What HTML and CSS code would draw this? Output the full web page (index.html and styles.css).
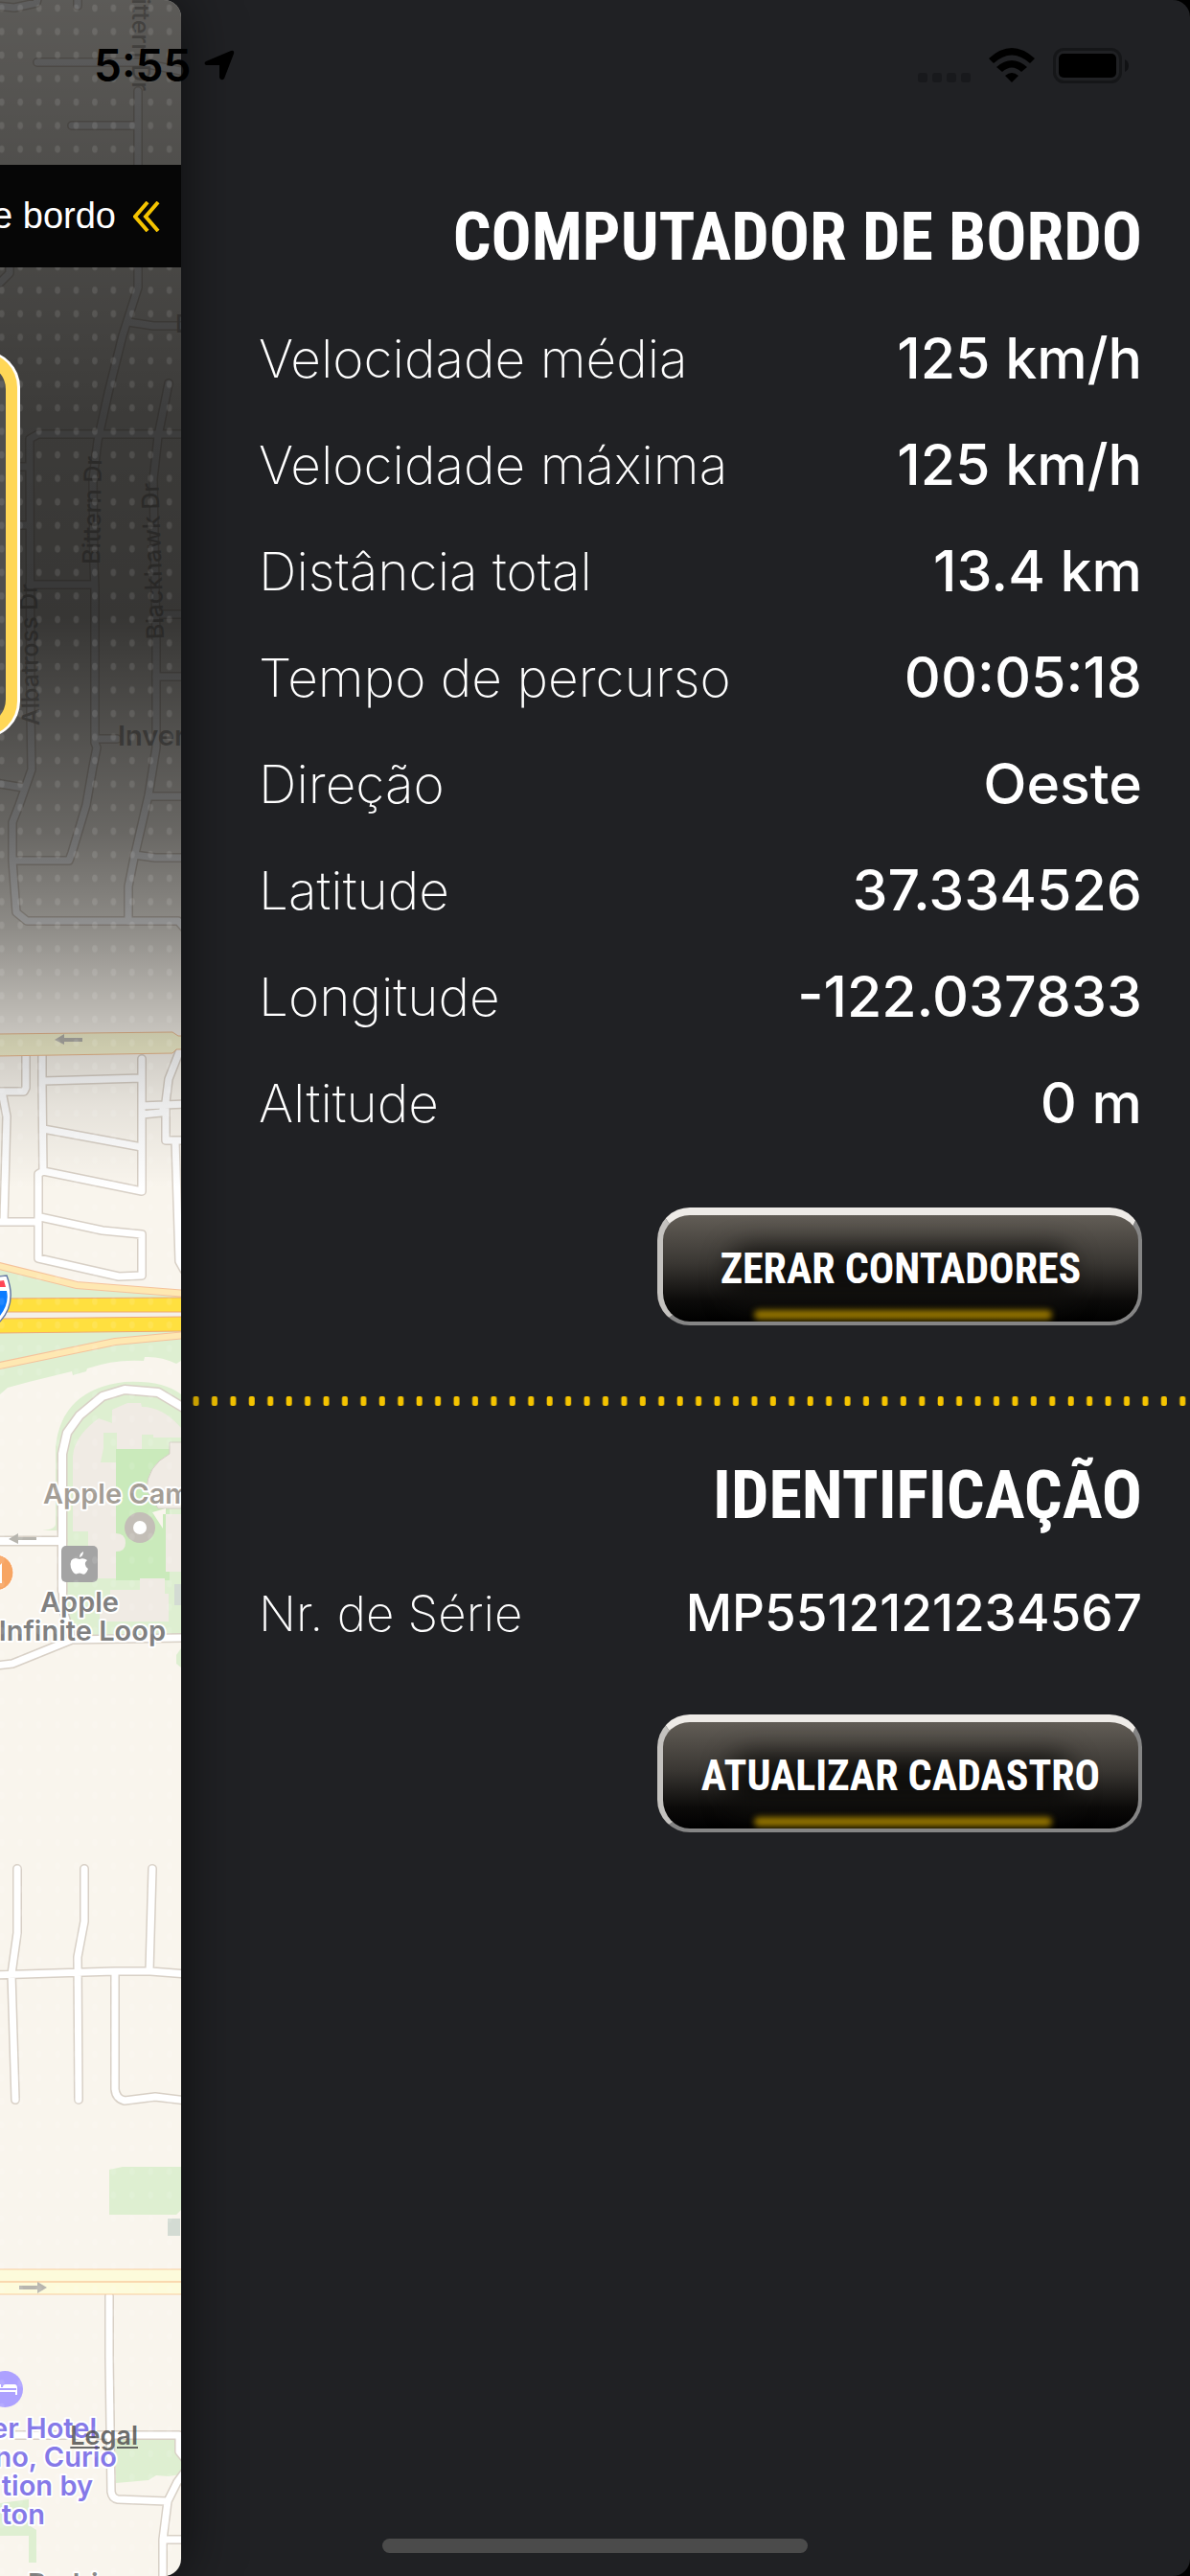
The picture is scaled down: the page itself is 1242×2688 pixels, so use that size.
FILE: index.html
```html
<!DOCTYPE html>
<html lang="pt-BR">
<head>
  <meta charset="UTF-8" />
  <meta name="viewport" content="width=device-width, initial-scale=1.0"/>
  <title>Computador de bordo</title>
  <link rel="stylesheet" href="styles.css">
</head>
<body>
  <header class="status-bar">
    <span class="status-time">5:55</span>
    <svg class="icon-location" viewBox="0 0 32 32" width="32" height="32" aria-hidden="true">
      <path d="M28 1 L2 12 Q-1 14 2 16 L16 16 L16 29 Q18 33 21 30 L31 4 Q32 0 28 1 Z"/>
    </svg>
    <svg class="icon-signal" viewBox="0 0 56 37" width="56" height="37" aria-hidden="true">
      <rect x="0" y="26" width="10" height="10" rx="3"/>
      <rect x="15" y="26" width="10" height="10" rx="3"/>
      <rect x="30" y="26" width="10" height="10" rx="3"/>
      <rect x="45" y="26" width="10" height="10" rx="3"/>
    </svg>
    <svg class="icon-wifi" viewBox="0 0 48 37" width="48" height="37" aria-hidden="true">
      <path d="M0 11 Q24 -11 48 11 L43 16 Q24 -1 5 16 Z"/>
      <path d="M8 20 Q24 6 40 20 L34 25 Q24 16 14 25 Z"/>
      <path d="M17 29 Q24 23 31 29 L24 36 Z"/>
    </svg>
    <svg class="icon-battery" viewBox="0 0 79 37" width="79" height="37" aria-hidden="true">
      <rect x="1.5" y="1.5" width="69" height="34" rx="10" fill="none" stroke="#151618" stroke-width="3"/>
      <rect x="6" y="6" width="60" height="25" rx="5"/>
      <path d="M75 12 Q79 14 79 18.500 Q79 23 75 25 Z" fill="#111214"/>
    </svg>
  </header>

  <main class="screen">
    <section class="map" aria-label="Mapa">
      <svg class="map-canvas" viewBox="0 0 189 2688" preserveAspectRatio="xMinYMin slice">
        <defs>
          <linearGradient id="shade" x1="0" y1="0" x2="0" y2="1240" gradientUnits="userSpaceOnUse">
            <stop offset="0" stop-opacity="0.63"/>
            <stop offset="0.140" stop-opacity="0.680"/>
            <stop offset="0.250" stop-opacity="0.720"/>
            <stop offset="0.350" stop-opacity="0.760"/>
            <stop offset="0.520" stop-opacity="0.780"/>
            <stop offset="0.600" stop-opacity="0.690"/>
            <stop offset="0.700" stop-opacity="0.580"/>
            <stop offset="0.780" stop-opacity="0.430"/>
            <stop offset="0.870" stop-opacity="0.200"/>
            <stop offset="0.930" stop-opacity="0.080"/>
            <stop offset="1" stop-opacity="0"/>
          </linearGradient>
          <pattern id="dots" x="11.500" y="-4" width="19.430" height="24.540" patternUnits="userSpaceOnUse">
            <ellipse cx="9.700" cy="12.300" rx="2.800" ry="3.800" fill="#fff" fill-opacity="0.100"/>
          </pattern>
          <g id="roads">
            <path d="M-5 6 L15 8 L38 3 L40 -5 M81 -5 V6 M39 65 H145 L189 74 M75 131 H144 M144 95 V300 L128 350 L113 410 L102 460 L97 500 L98 590 L99 613 V775 L101 780 L97 800 L90 840 L75 890 L72 898 H14"/>
            <path d="M134 336 L160 340 H195 M0 295 L10 285 V279 M176 400 L165 455 L160 500 L163 670 V780 L155 830 L140 895 L134 925 V961"/>
            <path d="M195 453 H40 L31 458 L32 745 L33 803 L20 840 L13 858 V898 L17 952 L28 961 H186 L192 968 M31 610 H98 M-5 487 H31 M21 548 H31 M163 706 H195 M163 641 H195 M100 771 H122 M158 831 H195 M-5 817 L25 822 M140 892 L162 895 H195"/>
            <path d="M27 1100 V1135 L25 1139 H-5 M44 1100 V1130 L45 1222 L40 1225 V1313 L124 1332 L148 1331 V1288 L107 1284 L42 1270 M45 1128 L148 1125 M148 1105 V1243 L45 1222 M148 1154 L195 1152 M148 1163 L168 1161 L173 1155 M187 1098 L176 1126 L173 1150 V1190 H195 M45 1178 L148 1197 M183 1190 L187 1316 L192 1325 M2 1139 L7 1165 L4 1275 M-5 1275 H40"/>
            <path d="M18 1950 V2017 L12 2060 L16 2191 M88 1950 V2005 L81 2042 L82 2191 M159 1950 L156 2056 M-5 2061 L120 2057 H157 L195 2060 M120 2057 V2180 Q121 2190 130 2192 L162 2188 L195 2192"/>
            <path d="M-5 1738 L13 1736 L75 1711 L195 1709 M65 1650 L66 1680 L75 1711"/>
            <path d="M114 2396 V2460 L116 2600 Q117 2607 123 2608 L174 2610 M16 2541 H187 V2558 L194 2567 M194 2578 L185 2590 L175 2610 L170 2650 V2695 M170 2650 H195"/>
          </g>
          <g id="avenues">
            <path d="M65 1660 V1517 L70 1495 L83 1477 L107 1457 L130 1450 L165 1453 L195 1471"/>
            <path d="M-5 1608 H65"/>
          </g>
        </defs>

        <rect class="land" width="189" height="2688"/>

        <!-- parks and campus -->
        <path class="park" d="M0 1322 L80 1342 L189 1352 V1420 L184 1423 Q168 1415 151 1416 L150 1420 Q120 1418 91 1428 L90 1431 L76 1435 L75 1431 L30 1442 L8 1448 L0 1455 Z"/>
        <path class="park" d="M58 1590 V1510 Q64 1450 130 1442 Q170 1440 189 1455 V1710 H78 L62 1660 V1597 Q56 1597 40 1597 Q58 1597 58 1590 Z"/>
        <path class="park" d="M189 1720 L184 1727 V1736 L189 1740 Z"/>
        <path class="grass" d="M121 1512 H177 V1649 H121 Z"/>
        <path class="building" d="M77 1513 Q82 1495 103 1480 L117 1485 V1471 L133 1464 H147 L148 1468 Q170 1468 189 1490 V1500 H160 V1497 H148 V1512 H122 V1495 H108 V1511 L105 1526 H121 V1600 Q131 1600 131 1610 Q131 1619 121 1619 V1647 H92 V1598 H76 V1520 Z"/>
        <path class="building edge" d="M192 1505 H177 V1517 Q153 1530 153 1555 L165 1574 H192 Z"/>
        <path class="building" d="M173 1580 H189 V1640 H173 Z M115 1659 H146 V1647 H172 V1663 H176 V1692 H104 V1673 H115 Z"/>
        <path class="land" d="M159 1578 L173 1574 V1580 H170 V1595 Z"/>
        <rect class="pool" x="182" y="1653" width="7" height="22"/>
        <path class="park" d="M114 2264 L128 2261 H189 V2306 L184 2311 H114 Z M120 2546 H183 V2560 L189 2568 V2582 L182 2583 L176 2584 L163 2583 L155 2588 L121 2591 Z M0 2612 L30 2608 V2635 L38 2640 V2674 H30 V2646 H0 Z"/>
        <rect class="pool" x="175" y="2315" width="13" height="18"/>

        <!-- streets: casing first, fill on top -->
        <use href="#roads" class="casing"/>
        <use href="#avenues" class="casing wide"/>
        <use href="#roads" class="fill"/>
        <use href="#avenues" class="fill wide"/>

        <path class="avenue" d="M-3 1079 L180 1077 L186 1081 H192 V1095 H184 L180 1099 L-3 1102 Z"/>
        <path class="ramp-edge" d="M-5 1320 L80 1341 L195 1350 M-5 1426 L120 1400 L195 1393"/>
        <path class="ramp" d="M-5 1320 L80 1341 L195 1350 M-5 1426 L120 1400 L195 1393"/>
        <rect x="0" y="1368" width="189" height="8" fill="#f4f0e8"/>
        <path class="highway" d="M-3 1355 L192 1354 V1369 H-3 Z M-3 1376 L192 1374 V1389 L-3 1391 Z"/>
        <path class="street-yellow" d="M-3 2368 H192 V2381 H-3 Z M-3 2381 H192 V2394 H-3 Z"/>
        <path class="way" d="M57 1085 L67 1079 V1083 H86 V1087 H67 V1090 Z M9 1606 L19 1600 V1604 H38 V1607 H19 V1611 Z M49 2387 L39 2381 V2385 H20 V2389 H39 V2393 Z"/>

        <!-- interstate shield -->
        <path d="M-10 1333 L7 1331 Q18 1360 0 1379 L-10 1385 Z" fill="#fff" stroke="#6478a5" stroke-width="1.500"/>
        <path d="M-10 1338 L4 1336 L6 1343 H-10 Z" fill="#ff4556"/>
        <path d="M-10 1347 H7 Q10 1360 0 1373 H-10 Z" fill="#0b7bff"/>

        <!-- places -->
        <circle cx="146" cy="1594" r="16" fill="#c3beb7"/>
        <circle cx="146" cy="1594" r="7" fill="#fff"/>
        <rect x="64" y="1613" width="38" height="38" rx="5" fill="#a4a4a4"/>
        <path d="M83 1627 Q87 1625 91 1628 Q86 1632 92 1637 Q89 1645 85 1642 Q83 1641 81 1642 Q77 1644 74 1636 Q72 1626 79 1626 Z M83 1625 Q83 1621 87 1619 Q87 1624 83 1625 Z" fill="#fff"/>
        <circle cx="-5" cy="1641" r="19" fill="#f7a563" stroke="#fff" stroke-width="1"/>
        <path d="M-4 1637 L2 1631 V1652 H0 V1643 H-4 Z" fill="#fff"/>
        <circle cx="5" cy="2493" r="19" fill="#ada1ff"/>
        <path d="M-5 2488 H1 V2491 H3 Q3 2488 6 2488 H15 Q18 2488 18 2492 V2499 H16 V2496 H-5 Z" fill="#fff"/>
        <path d="M-5 2492 H17 V2494 H-5 Z" fill="#ada1ff"/>

        <g class="label street">
          <text transform="translate(138 -18) rotate(90)">Bittern Dr</text>
          <text transform="translate(104 589) rotate(-89)">Bittern Dr</text>
          <text transform="translate(171 667) rotate(-92)">Blackhawk Dr</text>
          <text transform="translate(41 757) rotate(-91)">Albatross Dr</text>
          <text x="183" y="347">Dr</text>
        </g>
        <text class="label town" x="123" y="778">Inverness</text>
        <text class="label campus" x="45" y="1569">Apple Campus</text>
        <text class="label shop" x="83" y="1682" text-anchor="middle">Apple</text>
        <text class="label shop" x="173" y="1712" text-anchor="end">Infinite Loop</text>
        <g class="label hotel" text-anchor="end">
          <text x="101" y="2544">er Hotel</text>
          <text x="122" y="2574">no, Curio</text>
          <text x="97" y="2604">tion by</text>
          <text x="47" y="2634">ton</text>
        </g>
        <text class="label shop" x="29" y="2706">Rodrigues Ave</text>

        <rect width="189" height="1240" fill="url(#shade)"/>
        <rect width="189" height="2688" fill="url(#dots)"/>

        <!-- speed gauge frame -->
        <rect x="-200" y="366" width="221" height="404" rx="38" fill="#fff"/>
        <rect x="-198" y="368" width="216" height="400" rx="36" fill="#ffd757"/>
        <rect x="-186" y="380" width="192" height="376" rx="26" fill="#4e4e4e"/>
        <rect x="-186" y="380" width="192" height="376" rx="26" fill="url(#dots)"/>
      </svg>

      <button type="button" class="drawer-toggle">
        <span>Computador de bordo</span>
        <svg viewBox="0 0 28 32" width="28" height="32" aria-hidden="true">
          <path d="M15 1 L2 16 L15 31 M26 1 L13 16 L26 31"/>
        </svg>
      </button>
      <a class="legal" href="#legal">Legal</a>
    </section>

    <aside class="drawer">
      <section class="block">
        <h1>COMPUTADOR DE BORDO</h1>
        <dl class="readings">
          <div class="reading"><dt>Velocidade média</dt><dd>125 km/h</dd></div>
          <div class="reading"><dt>Velocidade máxima</dt><dd>125 km/h</dd></div>
          <div class="reading"><dt>Distância total</dt><dd>13.4 km</dd></div>
          <div class="reading"><dt>Tempo de percurso</dt><dd>00:05:18</dd></div>
          <div class="reading"><dt>Direção</dt><dd>Oeste</dd></div>
          <div class="reading"><dt>Latitude</dt><dd>37.334526</dd></div>
          <div class="reading"><dt>Longitude</dt><dd>-122.037833</dd></div>
          <div class="reading"><dt>Altitude</dt><dd>0 m</dd></div>
        </dl>
        <button type="button" class="metal-button">ZERAR CONTADORES</button>
      </section>

      <svg class="divider" width="100%" height="12" aria-hidden="true">
        <defs>
          <pattern id="rule" x="6" y="0" width="19.430" height="12" patternUnits="userSpaceOnUse">
            <rect x="6.500" y="1" width="6" height="10" rx="2" fill="#f5c400"/>
          </pattern>
        </defs>
        <rect width="100%" height="12" fill="url(#rule)"/>
      </svg>

      <section class="block">
        <h2>IDENTIFICAÇÃO</h2>
        <dl class="readings">
          <div class="reading serial"><dt>Nr. de Série</dt><dd>MP5512121234567</dd></div>
        </dl>
        <button type="button" class="metal-button">ATUALIZAR CADASTRO</button>
      </section>
    </aside>
  </main>

  <div class="home-indicator"></div>
</body>
</html>
```

FILE: styles.css
```css
:root {
  --panel: #202124;
  --yellow: #f5c400;
  --text: #fff;
  --condensed: "Roboto Condensed", Roboto, sans-serif;
}

* {
  box-sizing: border-box;
}

body {
  margin: 0;
  min-height: 100vh;
  position: relative;
  background-color: #000;
  color: var(--text);
  font-family: Inter, "Liberation Sans", sans-serif;
}

.screen {
  display: grid;
  grid-template-columns: 189px 1fr;
  min-height: 100vh;
  border-radius: 0 18px 18px 0;
  background-color: var(--panel);
}

/* status bar floats over both the map and the drawer */
.status-bar {
  position: absolute;
  top: 0;
  left: 0;
  right: 0;
  z-index: 3;
  display: flex;
  align-items: center;
  padding: 40px 64px 0 98px;
  height: 96px;
  color: #000;
}

.status-time {
  font-size: 46px;
  line-height: 56px;
  font-weight: 600;
}

.icon-location {
  margin-left: 14px;
}

.icon-signal {
  margin-left: auto;
  fill: #18191c;
}

.icon-wifi {
  margin-left: 18px;
}

.icon-battery {
  margin-left: 19px;
}

/* map */
.map {
  position: relative;
  z-index: 2;
  overflow: hidden;
  border-radius: 0 18px 18px 0;
  box-shadow: 0 0 60px rgba(0, 0, 0, 0.6);
}

.map-canvas {
  position: absolute;
  width: 100%;
  height: 100%;
}

.land { fill: #f9f5ed; }
.park { fill: #deefd1; }
.grass { fill: #caeabb; }
.building { fill: #f0ebe4; }
.edge { stroke: #d5cfc6; stroke-width: 1; }
.pool { fill: #d3dbd3; }

.casing,
.fill {
  fill: none;
  stroke-linecap: round;
  stroke-linejoin: round;
}

.casing { stroke: #d8d0c6; stroke-width: 10; }
.fill { stroke: #fff; stroke-width: 7; }
.casing.wide { stroke-width: 11; }
.fill.wide { stroke-width: 8; }

.avenue { fill: #f8f6d2; stroke: #f0bd90; stroke-width: 1; }
.street-yellow { fill: #fdfbdb; stroke: #f8cda0; stroke-width: 1; }
.highway { fill: #ffe03f; stroke: #eea873; stroke-width: 1; }
.ramp { fill: none; stroke: #fee8b2; stroke-width: 6; }
.ramp-edge { fill: none; stroke: #f5c29b; stroke-width: 8; }
.way { fill: #b7b5ae; }

.label {
  font-size: 29px;
  font-weight: 600;
  stroke: #fff;
  stroke-width: 4;
  stroke-linejoin: round;
  paint-order: stroke;
}

.street { fill: #b8b4ae; stroke: none; font-size: 25px; font-weight: 500; }
.town { fill: #aaa7a2; stroke: none; }
.campus { fill: #a39d95; }
.shop { fill: #808080; }
.hotel { fill: #8579e8; }

.drawer-toggle {
  position: absolute;
  top: 172px;
  right: 0;
  display: flex;
  align-items: center;
  gap: 18px;
  height: 107px;
  padding: 0 22px;
  border: none;
  background-color: #060606;
  color: var(--text);
  font-family: "Liberation Sans", Arial, sans-serif;
  font-size: 38px;
  white-space: nowrap;
  cursor: pointer;
}

.drawer-toggle svg {
  fill: none;
  stroke: var(--yellow);
  stroke-width: 4;
}

.legal {
  position: absolute;
  right: 45px;
  bottom: 130px;
  color: rgba(70, 70, 70, 0.8);
  font-size: 27px;
  line-height: 32px;
  font-weight: 600;
}

/* drawer */
.drawer {
  padding-top: 192px;
}

.block {
  display: flex;
  flex-direction: column;
  align-items: flex-end;
  padding: 0 50px 0 81px;
}

h1, h2 {
  margin: 0;
  font-family: var(--condensed);
  font-size: 70px;
  line-height: 110px;
  font-weight: 700;
  white-space: nowrap;
}

.readings {
  width: 100%;
  margin: 16px 0 54px;
}

.reading {
  display: flex;
  justify-content: space-between;
  align-items: center;
  height: 111px;
  white-space: nowrap;
}

.reading dt {
  font-size: 55px;
  font-weight: 200;
}

.reading dd {
  margin: 0;
  font-size: 59px;
  font-weight: 500;
}

.reading.serial {
  height: 104px;
}

.serial dt {
  font-size: 51px;
}

.serial dd {
  font-size: 53px;
}

.metal-button {
  position: relative;
  isolation: isolate;
  overflow: hidden;
  width: 506px;
  height: 123px;
  border: 4px solid #858585;
  border-top: 8px solid #eeebe7;
  border-left: 6px solid #c4c2bf;
  border-radius: 34px;
  background: linear-gradient(#625d56, #3a3733 45%, #0c0b0a 80%, #000);
  color: var(--text);
  font-family: var(--condensed);
  font-size: 44px;
  font-weight: 700;
  cursor: pointer;
}

/* dark well behind the caption */
.metal-button::before {
  content: "";
  position: absolute;
  z-index: -1;
  inset: 34px 70px 16px;
  border-radius: 20px;
  background-color: #0f0e0c;
  filter: blur(14px);
}

/* yellow light along the bottom */
.metal-button::after {
  content: "";
  position: absolute;
  z-index: -1;
  left: 95px;
  right: 90px;
  bottom: 2px;
  height: 10px;
  border-radius: 5px;
  background-color: #967600;
  filter: blur(3px);
}

.divider {
  display: block;
  margin: 73px 0 37px;
}

.home-indicator {
  position: absolute;
  bottom: 24px;
  left: 50%;
  z-index: 3;
  width: 444px;
  height: 15px;
  margin-left: -222px;
  border-radius: 8px;
  background-color: #4b4b4b;
}
```
